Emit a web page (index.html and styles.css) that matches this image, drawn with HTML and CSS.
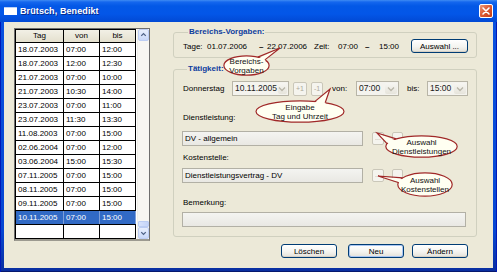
FILE: index.html
```html
<!DOCTYPE html>
<html lang="de">
<head>
    <meta charset="UTF-8">
    <title>Brütsch, Benedikt</title>
    <link rel="stylesheet" href="styles.css">
</head>
<body>
    <div class="window">

        <div class="titlebar">
            <span class="app-icon"></span>
            <span class="title">Brütsch, Benedikt</span>
            <span class="close">
                <svg width="12" height="12" viewBox="0 0 12 12"><path d="M3 3 L9 9 M9 3 L3 9" stroke="#fff" stroke-width="1.6" stroke-linecap="round"/></svg>
            </span>
        </div>

        <div class="client">

            <div class="listbox">
                <div class="grid">
                    <div class="grid-row grid-head">
                        <span>Tag</span><span>von</span><span>bis</span>
                    </div>
                    <div class="grid-row"><span>18.07.2003</span><span>07:00</span><span>12:00</span></div>
                    <div class="grid-row"><span>18.07.2003</span><span>12:00</span><span>12:30</span></div>
                    <div class="grid-row"><span>21.07.2003</span><span>07:00</span><span>10:00</span></div>
                    <div class="grid-row"><span>21.07.2003</span><span>10:30</span><span>14:00</span></div>
                    <div class="grid-row"><span>23.07.2003</span><span>07:00</span><span>11:00</span></div>
                    <div class="grid-row"><span>23.07.2003</span><span>11:30</span><span>13:30</span></div>
                    <div class="grid-row"><span>11.08.2003</span><span>07:00</span><span>15:00</span></div>
                    <div class="grid-row"><span>02.06.2004</span><span>07:00</span><span>12:00</span></div>
                    <div class="grid-row"><span>03.06.2004</span><span>15:00</span><span>15:30</span></div>
                    <div class="grid-row"><span>07.11.2005</span><span>07:00</span><span>15:00</span></div>
                    <div class="grid-row"><span>08.11.2005</span><span>07:00</span><span>15:00</span></div>
                    <div class="grid-row"><span>09.11.2005</span><span>07:00</span><span>15:00</span></div>
                    <div class="grid-row selected"><span>10.11.2005</span><span>07:00</span><span>15:00</span></div>
                    <div class="grid-row"><span></span><span></span><span></span></div>
                </div>
                <div class="vscroll">
                    <span class="sb-btn">
                        <svg width="10" height="10" viewBox="0 0 10 10"><path d="M2.5 6 L5 3.5 L7.5 6" fill="none" stroke="#4D6185" stroke-width="1.4"/></svg>
                    </span>
                    <span class="sb-track"></span>
                    <span class="sb-thumb"></span>
                    <span class="sb-btn">
                        <svg width="10" height="10" viewBox="0 0 10 10"><path d="M2.5 4 L5 6.5 L7.5 4" fill="none" stroke="#4D6185" stroke-width="1.4"/></svg>
                    </span>
                </div>
            </div>

            <div class="side">
                <fieldset class="group g-range">
                    <legend>Bereichs-Vorgaben:</legend>
                    <div class="range-row">
                        <span class="w24">Tage:</span>
                        <span class="w52">01.07.2006</span>
                        <span class="w8 dash">–</span>
                        <span class="w47">22.07.2006</span>
                        <span class="w24">Zeit:</span>
                        <span class="w27">07:00</span>
                        <span class="w14 dash">–</span>
                        <span class="w32">15:00</span>
                        <button class="btn btn-pick">Auswahl ...</button>
                    </div>
                </fieldset>

                <fieldset class="group g-task">
                    <legend>Tätigkeit:</legend>
                    <div class="day-row">
                        <span class="lbl-day">Donnerstag</span>
                        <span class="combo c-date"><span class="val">10.11.2005</span><span class="drop"><svg width="8" height="6" viewBox="0 0 8 6"><path d="M1 1.5 L4 4.5 L7 1.5" fill="none" stroke="#B9B6A9" stroke-width="1.3"/></svg></span></span>
                        <span class="mini m-plus">+1</span>
                        <span class="mini m-minus">-1</span>
                        <span class="lbl-von">von:</span>
                        <span class="combo c-von"><span class="val">07:00</span><span class="drop"><svg width="8" height="6" viewBox="0 0 8 6"><path d="M1 1.5 L4 4.5 L7 1.5" fill="none" stroke="#B9B6A9" stroke-width="1.3"/></svg></span></span>
                        <span class="lbl-bis">bis:</span>
                        <span class="combo c-bis"><span class="val">15:00</span><span class="drop"><svg width="8" height="6" viewBox="0 0 8 6"><path d="M1 1.5 L4 4.5 L7 1.5" fill="none" stroke="#B9B6A9" stroke-width="1.3"/></svg></span></span>
                    </div>

                    <div class="lbl lbl-dienst">Dienstleistung:</div>
                    <div class="field-row fr-dienst">
                        <span class="field">DV - allgemein</span>
                        <span class="mini m-dots">...</span>
                        <span class="mini m-clear"></span>
                    </div>

                    <div class="lbl lbl-kosten">Kostenstelle:</div>
                    <div class="field-row fr-kosten">
                        <span class="field">Dienstleistungsvertrag - DV</span>
                        <span class="mini m-dots">...</span>
                        <span class="mini m-clear"></span>
                    </div>

                    <div class="lbl lbl-bem">Bemerkung:</div>
                    <div class="field field-wide"></div>
                </fieldset>

                <div class="actions">
                    <button class="btn btn-del">Löschen</button>
                    <button class="btn btn-new">Neu</button>
                    <button class="btn">Ändern</button>
                </div>
            </div>
        </div>

        <!-- annotation bubbles drawn over the dialog -->
        <div class="callout co-range">
            <svg class="bubble" width="47" height="21" viewBox="0 0 47 21">
                <ellipse cx="23.5" cy="10.5" rx="22.6" ry="9.7" fill="#FFFFF2" stroke="#A02828" stroke-width="1.2"/>
                <polygon points="33,4.5 57,-7 40,7.5" fill="#FFFFF2"/>
                <polyline points="34.8,2.1 57,-7 41.9,4.9" fill="none" stroke="#A02828" stroke-width="1.2"/>
            </svg>
            <span class="co-text">Bereichs-<br>Vorgaben</span>
        </div>

        <div class="callout co-input">
            <svg class="bubble" width="90" height="23" viewBox="0 0 90 23">
                <ellipse cx="45" cy="11.5" rx="44" ry="10.7" fill="#FFFFF2" stroke="#A02828" stroke-width="1.2"/>
                <polygon points="59,3.5 75,-11 70,5" fill="#FFFFF2"/>
                <polyline points="60,1.4 75,-11 70.2,2.7" fill="none" stroke="#A02828" stroke-width="1.2"/>
            </svg>
            <span class="co-text">Eingabe<br>Tag und Uhrzeit</span>
        </div>

        <div class="callout co-dienst">
            <svg class="bubble" width="73" height="23" viewBox="0 0 73 23">
                <ellipse cx="36.5" cy="11.5" rx="35.7" ry="10.7" fill="#FFFFF2" stroke="#A02828" stroke-width="1.2"/>
                <polygon points="4,9 -8,-2 12,6" fill="#FFFFF2"/>
                <polyline points="2,8.7 -8,-2 11.2,3.9" fill="none" stroke="#A02828" stroke-width="1.2"/>
            </svg>
            <span class="co-text">Auswahl<br>Dienstleistungen</span>
        </div>

        <div class="callout co-kosten">
            <svg class="bubble" width="56" height="25" viewBox="0 0 56 25">
                <ellipse cx="28" cy="12.5" rx="27.2" ry="11.7" fill="#FFFFF2" stroke="#A02828" stroke-width="1.2"/>
                <polygon points="3,10.5 -19,4 7,7.5" fill="#FFFFF2"/>
                <polyline points="1.2,10.5 -19,4 5.7,5.8" fill="none" stroke="#A02828" stroke-width="1.2"/>
            </svg>
            <span class="co-text">Auswahl<br>Kostenstellen</span>
        </div>

    </div>
</body>
</html>
```

FILE: styles.css
```css
* {
    box-sizing: border-box;
}
body {
    margin: 0;
    font-family: "Liberation Sans", Arial, sans-serif;
    font-size: 8px;
    color: #000;
}

.window {
    position: relative;
    width: 497px;
    height: 272px;
    display: flex;
    flex-direction: column;
    background: linear-gradient(to bottom, #0A52E0 0%, #0646D2 85%, #0A2E9E 100%);
    box-shadow: inset 1px 0 0 #0019B8, inset -1px 0 0 #0019B8, inset 0 -1px 0 #06186E;
    overflow: hidden;
}

/* title bar */
.titlebar {
    height: 22px;
    display: flex;
    align-items: center;
    padding: 0 4px 0 4px;
    background: linear-gradient(to bottom, #3F8CF3 0, #1567EE 2px, #0358E6 6px, #0356E8 14px, #0249D4 100%);
}
.app-icon {
    width: 13px;
    height: 8px;
    background: #fff;
    border-top: 1px solid #B9D1F7;
    margin-right: 3px;
}
.title {
    color: #fff;
    font-weight: bold;
    font-size: 9px;
    letter-spacing: 0.1px;
    text-shadow: 1px 1px 0 #0A2A8C;
}
.close {
    margin-left: auto;
    width: 14px;
    height: 14px;
    border: 1px solid #fff;
    border-radius: 2px;
    background: linear-gradient(135deg, #EC9A7C 0%, #DD5C36 45%, #C23C17 100%);
    display: flex;
    align-items: center;
    justify-content: center;
}

/* client area */
.client {
    flex: 1;
    margin: 0 4px 4px 4px;
    background: #ECE9D8;
    display: flex;
    align-items: flex-start;
    padding: 6px 0 0 10px;
}

/* list on the left */
.listbox {
    width: 136px;
    height: 213px;
    border: 1px solid #6E6E6E;
    border-bottom: 2px solid #9C9A90;
    background: #fff;
    display: flex;
    overflow: hidden;
}
.grid {
    width: 121px;
    border-left: 1px solid #000;
    flex: none;
}
.grid-row {
    display: grid;
    grid-template-columns: 48px 36px 36px;
    height: 14px;
    border-bottom: 1px solid #000;
}
.grid-row span {
    border-right: 1px solid #000;
    padding-left: 2px;
    line-height: 13px;
    white-space: nowrap;
}
.grid-head {
    border-top: 1px solid #000;
    background: linear-gradient(to bottom, #F2F0E6, #E4E0CE);
}
.grid-head span {
    text-align: center;
    padding-left: 0;
    line-height: 12px;
}
.grid-row.selected {
    background: #316AC5;
    color: #fff;
}
.grid-row.selected span {
    border-right-color: #7E9FD8;
}

.vscroll {
    width: 12px;
    margin-left: 1px;
    display: flex;
    flex-direction: column;
    background: #F7F6F2;
    border-left: 1px solid #EEEDE6;
}
.sb-btn {
    height: 12px;
    flex: none;
    border: 1px solid #BCCDF3;
    border-radius: 2px;
    background: linear-gradient(to bottom, #E8EFFD, #C9D8F9);
    display: flex;
    align-items: center;
    justify-content: center;
}
.sb-track {
    flex: 1;
}
.sb-thumb {
    height: 6px;
    flex: none;
    border: 1px solid #BCCDF3;
    border-radius: 1px;
    background: linear-gradient(to right, #D8E3FC, #C4D4F8);
}

/* right side */
.side {
    width: 304px;
    margin-left: 23px;
    margin-top: -1px;
}
.group {
    margin: 0;
    border: 1px solid #D0D0BF;
    border-radius: 3px;
    min-width: 0;
}
.group legend {
    margin-left: 5px;
    padding: 0 1px;
    color: #0E3D9E;
    font-weight: bold;
    line-height: 10px;
}

.g-range {
    padding: 2px 8px 4px 9px;
}
.range-row {
    display: flex;
    align-items: center;
    height: 14px;
}
.range-row span {
    flex: none;
    white-space: nowrap;
}
.w8 { width: 8px; }
.w14 { width: 14px; }
.w24 { width: 24px; }
.w27 { width: 27px; }
.w32 { width: 32px; }
.w47 { width: 47px; }
.w52 { width: 52px; }
.dash {
    font-weight: bold;
}

.g-task {
    margin-top: 6px;
    padding: 0 8px 9px 8px;
}
.day-row {
    display: flex;
    align-items: center;
    height: 15px;
    margin-top: 7px;
}
.day-row > span {
    flex: none;
}
.lbl-day {
    width: 50px;
    padding-left: 1px;
}
.lbl-von {
    width: 24px;
    margin-left: 9px;
}
.lbl-bis {
    width: 20px;
    margin-left: 8px;
}

.combo {
    height: 15px;
    display: flex;
    border: 1px solid #B8B5A7;
    background: #F4F3EE;
}
.combo .val {
    flex: 1;
    padding-left: 2px;
    line-height: 13px;
    font-size: 8.5px;
    color: #1A1A1A;
}
.combo .drop {
    width: 12px;
    margin: 1px;
    border-radius: 2px;
    background: linear-gradient(to bottom, #F7F6F2, #E6E4DB);
    display: flex;
    align-items: center;
    justify-content: center;
}
.c-date { width: 57px; }
.c-von { width: 43px; }
.c-bis { width: 41px; }

.mini {
    height: 14px;
    border: 1px solid #CAC7B9;
    border-radius: 2px;
    background: #F5F4EE;
    color: #ACA899;
    font-size: 7px;
    line-height: 12px;
    text-align: center;
}
.m-plus {
    width: 14px;
    margin-left: 4px;
}
.m-minus {
    width: 12px;
    margin-left: 4px;
}

.lbl {
    line-height: 10px;
    padding-left: 1px;
}
.lbl-dienst { margin-top: 17px; }
.lbl-kosten { margin-top: 7px; }
.lbl-bem { margin-top: 15px; }

.field-row {
    display: flex;
    align-items: center;
    height: 15px;
}
.fr-dienst { margin-top: 8px; }
.fr-kosten { margin-top: 5px; }
.field {
    width: 181px;
    height: 15px;
    border: 1px solid #B2B0A5;
    background: linear-gradient(to bottom, #F4F4F1, #E9E8E3);
    padding-left: 2px;
    line-height: 13px;
    white-space: nowrap;
    overflow: hidden;
    flex: none;
}
.m-dots {
    width: 12px;
    height: 13px;
    margin-left: 9px;
    line-height: 9px;
}
.m-clear {
    width: 11px;
    height: 13px;
    margin-left: 8px;
}
.field-wide {
    width: 284px;
    margin-top: 4px;
}

/* bottom buttons */
.actions {
    display: flex;
    justify-content: flex-end;
    margin-top: 7px;
    padding-right: 9px;
}
.btn {
    width: 56px;
    height: 14px;
    padding: 0;
    font-family: inherit;
    font-size: 8px;
    color: #000;
    border: 1px solid #003C74;
    border-radius: 3px;
    background: linear-gradient(to bottom, #FFFFFF 0%, #F4F4F0 55%, #E3E1D8 100%);
    box-shadow: inset 0 -1px 0 #D6D0C5;
}
.btn-pick {
    width: 57px;
    flex: none;
}
.btn-del {
    margin-right: 11px;
}
.btn-new {
    margin-right: 8px;
    box-shadow: inset 0 0 0 1px #A9C6F2, inset 0 -1px 0 #7FA2E2;
}

/* callouts */
.callout {
    position: absolute;
    display: flex;
    align-items: center;
    justify-content: center;
}
.callout .bubble {
    position: absolute;
    left: 0;
    top: 0;
    overflow: visible;
}
.co-text {
    position: relative;
    text-align: center;
    line-height: 9px;
    font-size: 8px;
    color: #111;
}
.co-range {
    left: 223px;
    top: 55px;
    width: 47px;
    height: 21px;
}
.co-input {
    left: 255px;
    top: 100px;
    width: 90px;
    height: 23px;
}
.co-dienst {
    left: 385px;
    top: 135px;
    width: 73px;
    height: 23px;
}
.co-kosten {
    left: 397px;
    top: 172px;
    width: 56px;
    height: 25px;
}
```
